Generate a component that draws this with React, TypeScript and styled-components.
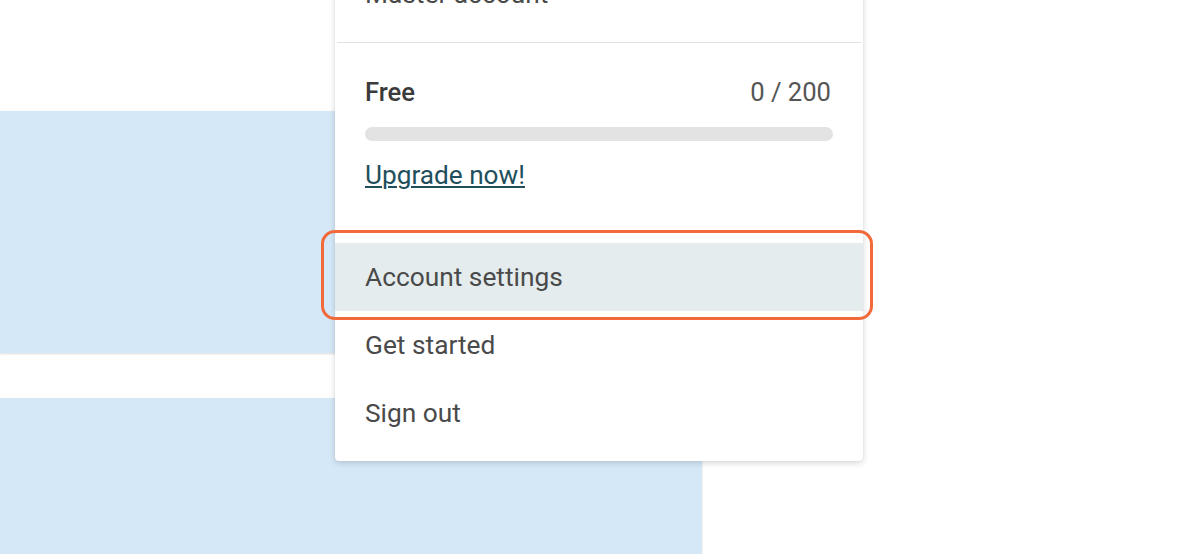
import React from 'react';
import styled, { createGlobalStyle } from 'styled-components';

const GlobalStyle = createGlobalStyle`
  html, body {
    margin: 0;
    padding: 0;
    background: #ffffff;
    font-family: Roboto, "Liberation Sans", Arial, sans-serif;
    overflow: hidden;
  }
`;

const Page = styled.div`
  position: relative;
  width: 1200px;
  height: 554px;
  overflow: hidden;
  background: #ffffff;
`;

const CardColumn = styled.div`
  display: flex;
  flex-direction: column;
  gap: 45px;
  padding-top: 111px;
  width: 702px;
`;

const Card = styled.div<{ $height: number }>`
  height: ${p => p.$height}px;
  background: #d5e8f8;
  box-shadow: 0 1px 2px rgba(0, 0, 0, 0.14);
`;

const Menu = styled.div`
  position: absolute;
  left: 335px;
  top: -40px;
  width: 528px;
  background: #ffffff;
  border-radius: 4px;
  box-shadow: 0 2px 6px rgba(0, 0, 0, 0.16), 0 0 1px rgba(0, 0, 0, 0.12);
  padding-bottom: 14px;
  color: #4a4a4a;
`;

const Header = styled.div`
  margin: 0 2px;
  padding: 14px 30px 28px 28px;
  font-size: 26.3px;
  line-height: 40px;
  border-bottom: 1px solid #e2e2e2;
`;

const PlanSection = styled.div`
  padding: 29px 30px 48px;
`;

const PlanRow = styled.div`
  display: flex;
  justify-content: space-between;
  align-items: baseline;
  font-size: 25.6px;
  line-height: 40px;
  padding-right: 2px;
`;

const PlanName = styled.span`
  font-weight: 500;
  color: #3a3a3a;
`;

const PlanCount = styled.span`
  color: #555555;
`;

const UsageBar = styled.div`
  margin-top: 15px;
  height: 14px;
  border-radius: 7px;
  background: #e3e3e3;
`;

const UpgradeLink = styled.a`
  display: inline-block;
  margin-top: 14px;
  font-size: 26.2px;
  line-height: 40px;
  color: #1f4f5c;
  text-decoration: underline;
  text-underline-offset: 2px;
  text-decoration-thickness: 1.5px;
`;

const ItemList = styled.div`
  display: flex;
  flex-direction: column;
`;

const Item = styled.div<{ $active?: boolean }>`
  position: relative;
  height: 68px;
  line-height: 68px;
  padding-left: 30px;
  font-size: 26.3px;
  color: #4a4a4a;
  background: ${p => (p.$active ? '#e4ecee' : 'transparent')};
`;

const FocusRing = styled.div`
  position: absolute;
  left: -14px;
  right: -10px;
  top: -13px;
  bottom: -9px;
  border: 3.5px solid #f26a3a;
  border-radius: 14px;
  pointer-events: none;
`;

export default function App() {
  return (
    <Page>
      <GlobalStyle />
      <CardColumn>
        <Card $height={242} />
        <Card $height={200} />
      </CardColumn>
      <Menu>
        <Header>Master account</Header>
        <PlanSection>
          <PlanRow>
            <PlanName>Free</PlanName>
            <PlanCount>0 / 200</PlanCount>
          </PlanRow>
          <UsageBar />
          <UpgradeLink>Upgrade now!</UpgradeLink>
        </PlanSection>
        <ItemList>
          <Item $active>
            Account settings
            <FocusRing />
          </Item>
          <Item>Get started</Item>
          <Item>Sign out</Item>
        </ItemList>
      </Menu>
    </Page>
  );
}
